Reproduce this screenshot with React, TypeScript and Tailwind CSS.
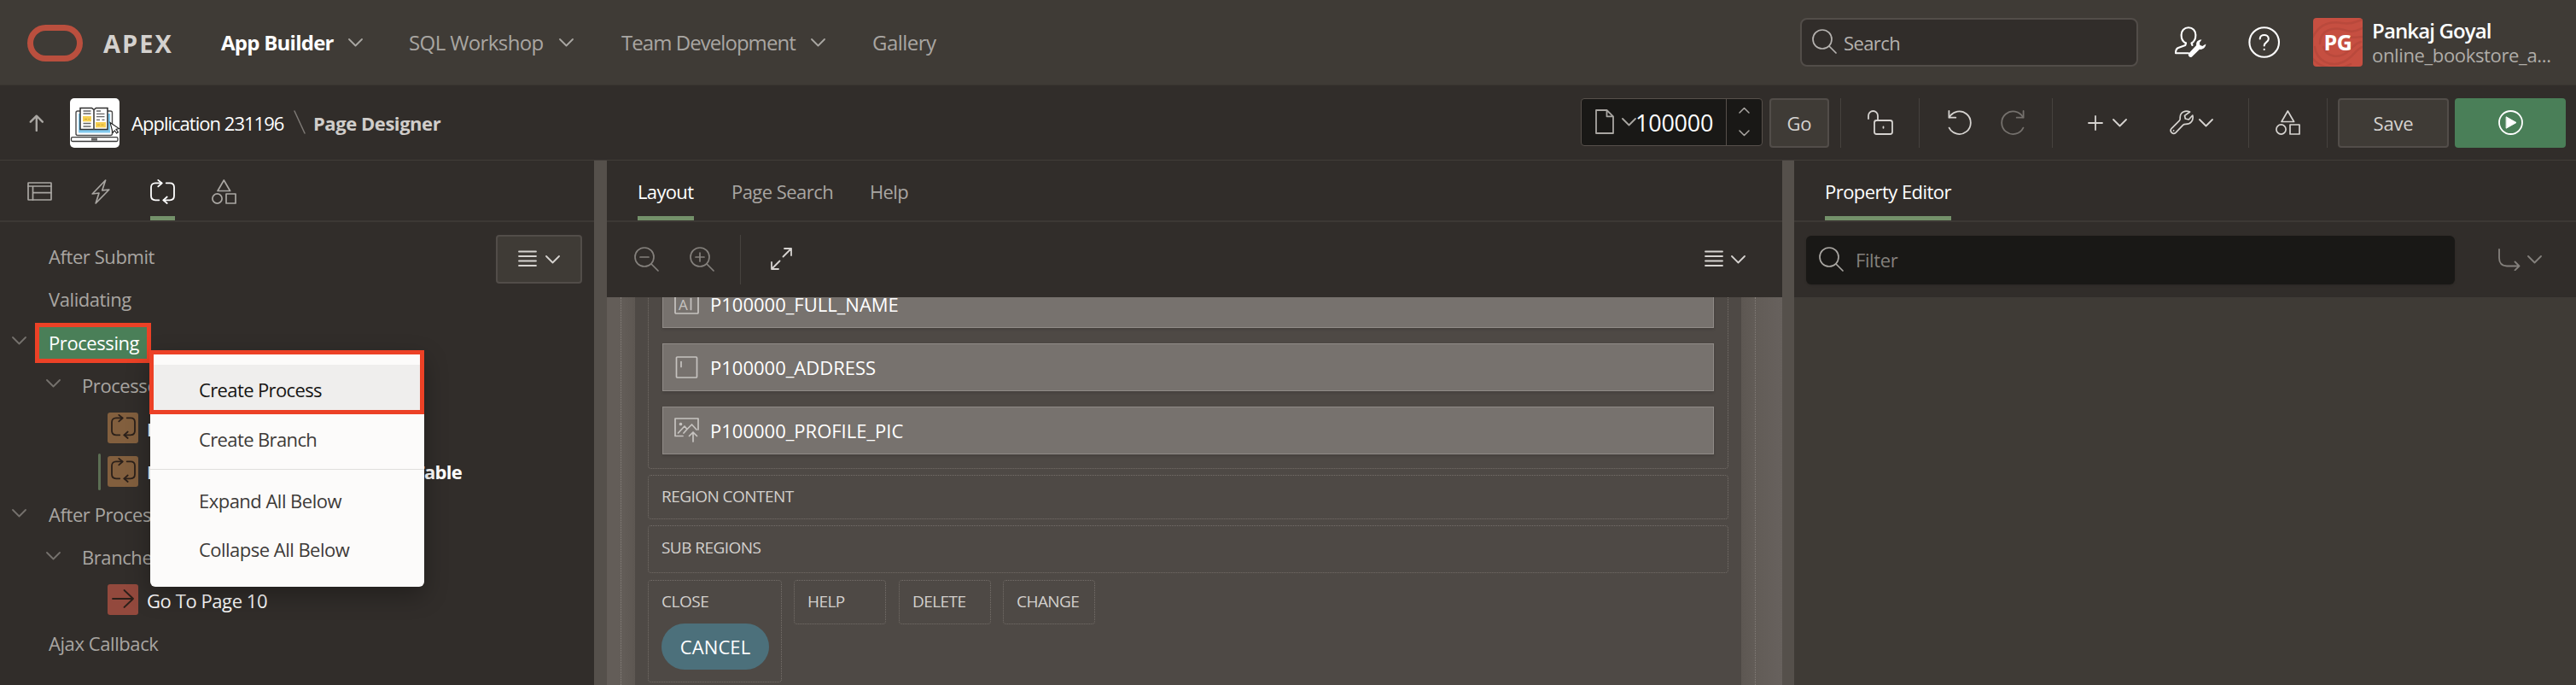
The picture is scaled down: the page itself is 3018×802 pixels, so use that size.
import type { ReactNode } from 'react';

type IconProps = { w: number; h: number; className?: string; sw?: number; children: ReactNode };

function Icon({ w, h, className = '', sw = 2, children }: IconProps) {
  return (
    <svg
      width={w}
      height={h}
      viewBox={`0 0 ${w} ${h}`}
      fill="none"
      stroke="currentColor"
      strokeWidth={sw}
      strokeLinecap="round"
      strokeLinejoin="round"
      className={`shrink-0 ${className}`}
    >
      {children}
    </svg>
  );
}

const Chevron = ({ className = '', sw = 1.8 }: { className?: string; sw?: number }) => (
  <Icon w={17} h={10} sw={sw} className={className}>
    <path d="M1 1 L8.5 8.5 L16 1" />
  </Icon>
);

const SmallChevron = ({ className = '' }: { className?: string }) => (
  <Icon w={13} h={8} sw={1.5} className={className}>
    <path d="M1 1 L6.5 6.5 L12 1" />
  </Icon>
);

const Magnifier = ({ className = '', sign }: { className?: string; sign?: 'plus' | 'minus' }) => (
  <Icon w={29} h={29} sw={1.7} className={className}>
    <circle cx="12" cy="12" r="11" />
    <path d="M20 20 L28 28" />
    {sign && <path d="M7 12 H17" />}
    {sign === 'plus' && <path d="M12 7 V17" />}
  </Icon>
);

const Shapes = ({ className = '' }: { className?: string }) => (
  <Icon w={29} h={29} sw={1.7} className={className}>
    <path d="M14.3 1 L7 13.5 H21.6 Z" />
    <circle cx="6.5" cy="22.5" r="5.6" />
    <rect x="17" y="17" width="11" height="11" />
  </Icon>
);

const Cycle = ({ className = '' }: { className?: string }) => (
  <Icon w={29} h={29} sw={1.8} className={className}>
    <path d="M13.5 4.3 H6 C3 4.3 1 6.3 1 9.3 V19.3 C1 22.3 3 24.3 6 24.3 H10.3" />
    <path d="M9.3 0.9 L13.6 4.5 L9.3 8.3" />
    <path d="M18.7 4.3 H23 C26 4.3 28 6.3 28 9.3 V19.3 C28 22.3 26 24.3 23 24.3 H15.5" />
    <path d="M19.7 20.5 L15.4 24.3 L19.7 28" />
  </Icon>
);

const MenuLines = ({ className = '' }: { className?: string }) => (
  <Icon w={22} h={20} sw={1.8} className={className}>
    <path d="M1 1.5 H21 M1 7 H21 M1 12.5 H21 M1 18 H21" />
  </Icon>
);

const Undo = ({ className = '' }: { className?: string }) => (
  <Icon w={28} h={29} sw={1.8} className={className}>
    <path d="M1.4 1 V8.7 H9.3" />
    <path d="M1.8 8.4 A13.3 13.3 0 1 1 1.6 20.6" />
  </Icon>
);

const AppBadge = () => (
  <svg width="58" height="58" viewBox="0 0 58 58" className="shrink-0 rounded-[5px] bg-white">
    <rect x="7" y="15" width="42.5" height="28.5" rx="2" fill="#fff" stroke="#4a4a4a" strokeWidth="1.4" />
    <rect x="10" y="18" width="37" height="22.5" fill="#82c9ee" />
    <path d="M12 11.5 H25.5 L28 13.5 L30.5 11.5 H44 V36.5 H12 Z" fill="#fff" stroke="#2f2f2f" strokeWidth="1.5" />
    <path d="M28 13.5 V36.5" stroke="#555" strokeWidth="1.8" />
    <path
      d="M15.5 15 H24.5 M15.5 18 H24.5 M31 15 H36 M31 18.3 H40.5 M31 21.7 H40.5 M31 25.4 H35 M37.5 25.4 H40.5 M15.5 29.5 H24.5 M15.5 33 H24.5"
      stroke="#666"
      strokeWidth="1.3"
    />
    <rect x="15" y="21" width="10" height="6.3" fill="#f6cf52" />
    <rect x="30" y="28" width="12" height="6.3" fill="#f6cf52" />
    <path d="M32 31.2 H40 M17 24.5 H23" stroke="#c79f2e" strokeWidth="0.9" strokeDasharray="3 1.5" />
    <rect x="1.5" y="45.7" width="54.5" height="4.8" rx="1.5" fill="#fff" stroke="#3a3a3a" strokeWidth="1.3" />
    <rect x="25" y="46.5" width="7" height="3.2" fill="#666" />
    <path d="M47 28.5 L57.5 35.5 L54 36.4 L56.5 39.8 L54.5 41 L52.3 37.8 L50.2 40.3 Z" fill="#fff" stroke="#222" strokeWidth="1.1" />
  </svg>
);

const Header = () => (
  <header className="flex h-[100px] items-center border-b border-[#393531] bg-[#3f3b36] pl-8 text-[24px] text-[#a9a6a2]">
    <div className="mt-[2px] h-[43px] w-[65px] rounded-[22px] border-[7.5px] border-[#ba4f3e]" />
    <div className="ml-6 w-[138px] pt-px text-[29px] font-bold tracking-[2px] text-[#d4d1ce]">APEX</div>
    <div className="w-[149px] font-bold tracking-[-0.75px] text-white">App Builder</div>
    <Chevron />
    <div className="ml-[54px] w-[176px] tracking-[-0.6px]">SQL Workshop</div>
    <Chevron />
    <div className="ml-[56px] w-[222px] tracking-[-0.95px]">Team Development</div>
    <Chevron />
    <div className="ml-[55px] tracking-[-0.55px]">Gallery</div>

    <div className="ml-auto flex h-[57px] w-[396px] items-center rounded-lg border-2 border-[#524d49] bg-[#312d2a] pl-3 text-[22px] tracking-[-0.6px] text-[#b5b2af]">
      <Magnifier className="-mt-[2px]" />
      <span className="ml-2">Search</span>
    </div>
    <Icon w={37} h={37} sw={2.1} className="ml-[43px] text-white">
      <path d="M13 19.5 C9.5 18 7.6 14 7.6 10 C7.6 5 11 1.2 16 1.2 C21 1.2 24.4 5 24.4 10 C24.4 14 22.5 18 19.5 19.5 L20.5 22" />
      <path d="M13 19.5 L12.3 22 L4 25 C1.5 26 1 28 1 31.2 H16" />
      <path
        d="M31.5 15.5 C27.5 15 24.5 18 25.2 22 L16.3 31.5 C14.6 34 17.5 37.3 20 35.5 L29 26.8 C33 27.5 36.5 24 36.3 20.5 L32.3 23 L29.3 21.8 L29 18.8 Z"
        fill="currentColor"
        stroke="none"
      />
    </Icon>
    <Icon w={38} h={37} sw={2.1} className="ml-[49px] text-white">
      <circle cx="18.7" cy="18.5" r="17.3" />
      <path d="M13.7 14.5 C13.7 8.5 23.8 8.5 23.8 14.5 C23.8 18.5 18.7 18.3 18.7 22.5" />
      <path d="M18.7 26.8 V27" />
    </Icon>
    <div className="relative ml-[38px] flex h-[57px] w-[58px] items-center justify-center overflow-hidden rounded bg-[#c64f41] text-[25px] font-bold tracking-[-0.5px] text-white">
      <Icon w={58} h={57} sw={2.5} className="absolute left-0 top-0 text-[#b9493c]">
        <path d="M0 22 C8 6 22 4 34 6 S50 4 58 2 M8 30 C8 14 24 10 36 14 S52 14 58 12 M40 22 C48 24 52 22 58 22 M2 34 C4 50 20 58 34 52 C46 48 50 36 58 34 M12 34 C16 46 30 48 40 40 C48 34 48 30 56 28 M0 48 C10 60 30 62 44 54" />
      </Icon>
      <span className="relative">PG</span>
    </div>
    <div className="ml-[11px] w-[239px] leading-[28px]">
      <div className="font-semibold tracking-[-0.87px] text-white">Pankaj Goyal</div>
      <div className="text-[22px] tracking-[-0.35px] text-[#b0ada9]">online_bookstore_a...</div>
    </div>
  </header>
);

const VLine = ({ className = '' }: { className?: string }) => (
  <div className={`h-[58px] w-px shrink-0 bg-[#46423e] ${className}`} />
);

const Toolbar = () => (
  <div className="flex h-[88px] items-center border-b border-[#403c38] bg-[#312d2a] text-[22px] text-[#d6d3d0]">
    <Icon w={17} h={20} sw={2.4} className="ml-[34px] text-[#a9a6a2]">
      <path d="M8.8 19 V2 M1.8 8.7 L8.8 1.7 L15.8 8.7" />
    </Icon>
    <div className="ml-[31px] flex">
      <AppBadge />
    </div>
    <div className="ml-[14px] w-[190px] tracking-[-0.98px] text-white">Application 231196</div>
    <Icon w={14} h={28} sw={1.5} className="-mt-[2px] text-[#7d7975]">
      <path d="M1 1 L13 27" />
    </Icon>
    <div className="ml-[9px] font-bold tracking-[-0.45px] text-[#d0cdca]">Page Designer</div>

    <div className="mb-[2px] ml-auto flex h-[56px] w-[213px] rounded border border-[#57504b] bg-[#191816] text-[#a9a6a2]">
      <div className="flex grow items-center pl-4">
        <Icon w={22} h={29} sw={1.8}>
          <path d="M1 1 H13.5 L21 8.3 V28 H1 Z M13.5 1 V8.3 H21" />
        </Icon>
        <Chevron className="ml-[9px]" />
        <span className="-ml-px pt-px text-[27px] font-medium tracking-[-0.25px] text-white">100000</span>
      </div>
      <div className="flex w-[42px] flex-col items-center justify-center gap-[19px] border-l border-[#57504b]">
        <SmallChevron className="rotate-180" />
        <SmallChevron />
      </div>
    </div>
    <div className="ml-2 flex h-[58px] w-[70px] items-center justify-center rounded border-2 border-[#524d49] bg-[#3f3b36] pt-px font-medium">
      Go
    </div>
    <VLine className="ml-[13px]" />
    <Icon w={30} h={29} sw={1.8} className="ml-[31px]">
      <rect x="8" y="12" width="21" height="16" rx="2.5" />
      <path d="M1 10 V6.5 A5.5 5.5 0 0 1 12 6.5 V12 M18.5 19.5 V20.8" />
    </Icon>
    <VLine className="ml-[30px]" />
    <Undo className="ml-[33px]" />
    <Undo className="ml-[34px] -scale-x-100 text-[#75716d]" />
    <VLine className="ml-[32px]" />
    <Icon w={18} h={18} sw={1.8} className="ml-[41px]">
      <path d="M9 1 V17 M1 9 H17" />
    </Icon>
    <Chevron className="ml-[11px]" />
    <Icon w={28} h={29} sw={1.7} className="ml-[50px]">
      <path d="M23.6 2 C19 -0.2 11.5 1.5 12.2 10 C12.2 11 11.9 11.6 11.2 12.3 L2.2 21.3 C-0.8 24.3 3.6 29.6 7 26.4 L15.6 17.4 C16.5 16.5 17.5 16.4 18.6 16.4 C24.5 16.5 28.3 11.8 26.8 6 L22.3 11 L18.3 10 L17.5 6.4 Z" />
      <path d="M4.6 23.8 V24" />
    </Icon>
    <Chevron className="ml-[6px]" />
    <VLine className="ml-[41px]" />
    <Shapes className="ml-[31px]" />
    <VLine className="ml-[31px]" />
    <div className="ml-[12px] flex h-[58px] w-[130px] items-center justify-center rounded border-2 border-[#524d49] bg-[#3f3b36] pt-px font-medium tracking-[-0.2px]">
      Save
    </div>
    <div className="ml-[7px] mr-[12px] flex h-[58px] w-[130px] items-center justify-center rounded bg-[#4a7f58] text-white">
      <Icon w={29} h={29} sw={1.8}>
        <circle cx="14.5" cy="14.5" r="13.5" />
        <path d="M9.5 8 L21 14.5 L9.5 21 Z" fill="currentColor" stroke="currentColor" strokeWidth="1" />
      </Icon>
    </div>
  </div>
);

const TabBar = ({ children, className = '' }: { children: ReactNode; className?: string }) => (
  <div className={`flex h-[72px] shrink-0 items-stretch border-b-2 border-[#3c3834] text-[22px] text-[#a9a6a2] ${className}`}>
    {children}
  </div>
);

const Tab = ({ active = false, className = '', children }: { active?: boolean; className?: string; children: ReactNode }) => (
  <div
    className={`flex items-center border-b-[5px] pt-[7px] ${
      active ? 'border-[#74916a] text-white' : 'border-transparent'
    } ${className}`}
  >
    {children}
  </div>
);

const Row = ({ children, className = '' }: { children: ReactNode; className?: string }) => (
  <div className={`flex h-[50.4px] items-center whitespace-nowrap tracking-[-0.42px] ${className}`}>{children}</div>
);

const NodeBadge = ({ className = '', children }: { className?: string; children: ReactNode }) => (
  <div className={`flex size-9 shrink-0 items-center justify-center rounded-[3px] text-[#2b201a] ${className}`}>
    {children}
  </div>
);

const ContextMenu = () => (
  <div className="absolute left-[176px] top-[222px] h-[277px] w-[321px] rounded-md bg-[#fcfbfa] pt-[17px] text-[22px] tracking-[-0.52px] text-[#3d3a38] shadow-[0_10px_28px_rgba(0,0,0,0.3)]">
    <div className="flex h-[58px] items-center bg-[#efeeed] pb-px pl-[57px] font-medium tracking-[-0.62px] text-[#161513]">
      Create Process
    </div>
    <div className="flex h-[58px] items-center pb-px pl-[57px] tracking-[-0.62px]">Create Branch</div>
    <div className="mb-2 mt-[6px] h-px bg-[#dfdedc]" />
    <div className="flex h-[57px] items-center pb-px pl-[57px]">Expand All Below</div>
    <div className="flex h-[57px] items-center pb-px pl-[57px]">Collapse All Below</div>
    <div className="absolute -left-px top-0 h-[75px] w-[322px] border-[5px] border-[#ec4126]" />
  </div>
);

const TreePanel = () => (
  <aside className="relative flex w-[696px] shrink-0 flex-col overflow-hidden bg-[#312d2a]">
    <TabBar className="pl-8">
      <Tab>
        <Icon w={29} h={22} sw={1.7}>
          <rect x="1" y="1" width="27" height="20" rx="0.5" />
          <path d="M1 5 H28 M6.5 5 V21 M6.5 12.7 H28" />
        </Icon>
      </Tab>
      <Tab className="ml-[46px]">
        <Icon w={22} h={29} sw={1.7}>
          <path d="M16.6 1 L1.2 17 L9 16 L5.2 28 L20.8 12 L12.8 12.8 Z" />
        </Icon>
      </Tab>
      <Tab active className="ml-[47px]">
        <Cycle />
      </Tab>
      <Tab className="ml-[43px]">
        <Shapes />
      </Tab>
    </TabBar>

    <div className="flex grow items-start justify-between pr-[14px] pt-[15px] text-[22px] text-[#a9a6a2]">
      <div>
        <Row className="pb-px pl-[57px]">After Submit</Row>
        <Row className="pb-px pl-[57px]">Validating</Row>
        <Row className="pl-[14px] font-medium tracking-[-0.25px] text-white">
          <Chevron className="-mt-[3px] text-[#75716d]" />
          <div className="ml-[10px] mt-px flex h-[47px] w-[136px] items-center border-[5px] border-[#ec4126] bg-[#4a7f58] pl-[11px]">
            Processing
          </div>
        </Row>
        <Row className="pb-px pl-[54px]">
          <Chevron className="-mt-[3px] mr-[25px] text-[#75716d]" />
          Processes
        </Row>
        <Row className="pl-[126px] font-bold text-white">
          <NodeBadge className="-mt-[2px] bg-[#825f3e]">
            <Cycle className="-mt-[2px]" />
          </NodeBadge>
          <span className="ml-[10px]">I</span>
        </Row>
        <Row className="pl-[115px] font-bold text-white">
          <div className="h-[43px] w-[3px] rounded-sm bg-[#5c6f54]" />
          <NodeBadge className="-mt-px ml-2 bg-[#825f3e]">
            <Cycle className="-mt-[2px]" />
          </NodeBadge>
          <span className="ml-[10px]">I</span>
          <span className="ml-[306px] tracking-[-0.7px]">Table</span>
        </Row>
        <Row className="pb-px pl-[14px]">
          <Chevron className="-mt-[3px] mr-[26px] text-[#75716d]" />
          After Processing
        </Row>
        <Row className="pb-px pl-[54px]">
          <Chevron className="-mt-[3px] mr-[25px] text-[#75716d]" />
          Branches
        </Row>
        <Row className="pl-[126px] font-medium tracking-[-0.7px] text-white">
          <NodeBadge className="-mt-[2px] bg-[#93493d]">
            <Icon w={26} h={22} sw={1.8} className="-mt-[3px]">
              <path d="M1 11 H25 M14.5 1 L25 11 L14.5 21" />
            </Icon>
          </NodeBadge>
          <span className="ml-[10px]">Go To Page 10</span>
        </Row>
        <Row className="pb-px pl-[57px]">Ajax Callback</Row>
      </div>
      <div className="flex h-[57px] w-[101px] items-center justify-center gap-[10px] rounded border-2 border-[#524d49] bg-[#3f3b36] text-[#d6d3d0]">
        <MenuLines className="-mt-[2px]" />
        <Chevron />
      </div>
    </div>
    <ContextMenu />
  </aside>
);

const ItemBar = ({ icon, label }: { icon: ReactNode; label: string }) => (
  <div className="flex h-[56px] w-[1232px] items-center border border-[#908b87] bg-[#77726e] pl-[13px] text-[22px] font-medium text-white shadow-[0_2px_3px_rgba(0,0,0,0.12)]">
    <div className="flex w-[42px] text-[#c6c3c0]">{icon}</div>
    {label}
  </div>
);

const Slot = ({ label, className = '' }: { label: string; className?: string }) => (
  <div className={`rounded border border-dotted border-[#756f6a] pl-[15px] text-[19px] leading-[26px] tracking-[-0.55px] text-[#d3d0cd] ${className}`}>
    {label}
  </div>
);

const LayoutPanel = () => (
  <main className="flex w-[1377px] shrink-0 flex-col overflow-hidden bg-[#312d2a]">
    <TabBar className="pl-9">
      <Tab active className="w-[66px] whitespace-nowrap pb-px font-medium tracking-[-0.65px]">
        Layout
      </Tab>
      <Tab className="ml-11 w-[120px] whitespace-nowrap pb-px tracking-[-0.55px]">Page Search</Tab>
      <Tab className="ml-[42px] pb-px tracking-[-0.6px]">Help</Tab>
    </TabBar>
    <div className="flex h-[88px] shrink-0 items-center pl-8 text-[#d6d3d0]">
      <Magnifier sign="minus" className="-mt-[2px] text-[#84807c]" />
      <Magnifier sign="plus" className="-mt-[2px] ml-[36px] text-[#84807c]" />
      <VLine className="ml-[30px]" />
      <Icon w={25} h={26} sw={1.8} className="ml-[35px] -mt-[2px]">
        <path d="M14.5 10.5 L24 1 M16 1 H24 V9 M10.5 15.5 L1 25 M1 17 V25 H9" />
      </Icon>
      <MenuLines className="ml-auto -mt-[3px]" />
      <Chevron className="ml-[9px] mr-[43px] -mt-px" />
    </div>
    <div className="flex grow overflow-hidden bg-[#655f5b]">
      <div className="w-[17px] shrink-0 border-r border-dotted border-[#87817c] bg-[#635d58]" />
      <div className="w-4 shrink-0 bg-linear-to-r from-[#635d58] to-[#5d5752]" />
      <div className="w-[1296px] shrink-0 overflow-hidden bg-[#4e4945] px-[15px]">
        <div className="-mt-8 flex h-[233px] flex-col gap-[18px] rounded border border-dotted border-[#756f6a] pl-4 pt-[11px]">
          <ItemBar
            label="P100000_FULL_NAME"
            icon={
              <Icon w={29} h={24} sw={1.7}>
                <rect x="1" y="1" width="27" height="22" rx="1" />
                <text x="5" y="18.5" fontSize="17" fill="currentColor" stroke="none" className="font-[Open_Sans]">
                  A
                </text>
                <path d="M19.5 5.5 V18.5" />
              </Icon>
            }
          />
          <ItemBar
            label="P100000_ADDRESS"
            icon={
              <Icon w={29} h={26} sw={1.7}>
                <rect x="2.5" y="1" width="24" height="24" rx="1" />
                <path d="M8 6.5 V12.5" />
              </Icon>
            }
          />
          <ItemBar
            label="P100000_PROFILE_PIC"
            icon={
              <Icon w={29} h={29} sw={1.7} className="-mt-[2px]">
                <path d="M10 21.5 H1 V1 H28 V14 M4.5 18 L12 10 L15 13.5 L20.5 8 L26 14 M11 18 L15 13.5 M22 28 V17.5 M17.5 21.5 L22 17 L26.5 21.5" />
                <circle cx="7.5" cy="7.5" r="1" />
              </Icon>
            }
          />
        </div>
        <Slot label="REGION CONTENT" className="mt-[7px] h-[52px] pt-[11px]" />
        <Slot label="SUB REGIONS" className="mt-[7px] h-[56px] pt-3" />
        <div className="mt-2 flex items-start">
          <div className="flex h-[120px] w-[157px] flex-col rounded border border-dotted border-[#756f6a] pl-[15px] pt-[11px] text-[19px] leading-[26px] tracking-[-0.45px] text-[#d3d0cd]">
            CLOSE
            <div className="mt-[13px] flex h-[54px] w-[126px] items-center justify-center rounded-full bg-[#4c707b] text-[22px] font-medium tracking-[0.1px] text-white">
              CANCEL
            </div>
          </div>
          <Slot label="HELP" className="ml-[14px] h-[52px] w-[108px] pt-[11px]" />
          <Slot label="DELETE" className="ml-[15px] h-[52px] w-[108px] pt-[11px]" />
          <Slot label="CHANGE" className="ml-[14px] h-[52px] w-[108px] pt-[11px]" />
        </div>
      </div>
      <div className="w-[17px] shrink-0 border-r border-dotted border-[#87817c] bg-linear-to-r from-[#5d5752] to-[#625c57]" />
      <div className="grow bg-linear-to-r from-[#625c57] to-[#67615d]" />
    </div>
  </main>
);

const PropertyPanel = () => (
  <aside className="flex grow flex-col bg-[#3f3b36]">
    <TabBar className="bg-[#312d2a] pl-9">
      <Tab active className="w-[148px] whitespace-nowrap pb-px font-medium tracking-[-0.55px]">
        Property Editor
      </Tab>
    </TabBar>
    <div className="flex h-[88px] items-center bg-[#312d2a] pl-[14px] text-[22px] text-[#84807c]">
      <div className="flex h-[57px] w-[760px] items-center rounded-md bg-[#191816] pl-[15px] tracking-[-0.4px] shadow-sm">
        <Magnifier className="-mt-[2px] text-[#a9a6a2]" />
        <span className="ml-[14px]">Filter</span>
      </div>
      <Icon w={26} h={26} sw={1.8} className="ml-[51px]">
        <path d="M1 1 V11 C1 17 4 20.5 10 20.5 H24.5 M19.5 15.5 L24.5 20.5 L19.5 25.3" />
      </Icon>
      <Chevron className="ml-[8px]" />
    </div>
  </aside>
);

const Splitter = ({ className = '' }: { className?: string }) => (
  <div className={`shrink-0 bg-[#55504b] ${className}`} />
);

export default function App() {
  return (
    <div className="flex h-[802px] w-[3018px] flex-col overflow-hidden bg-[#312d2a] font-['Open_Sans','Noto_Sans',sans-serif] font-[460] leading-none">
      <Header />
      <Toolbar />
      <div className="flex min-h-0 grow">
        <TreePanel />
        <Splitter className="w-[15px]" />
        <LayoutPanel />
        <Splitter className="w-[14px]" />
        <PropertyPanel />
      </div>
    </div>
  );
}
